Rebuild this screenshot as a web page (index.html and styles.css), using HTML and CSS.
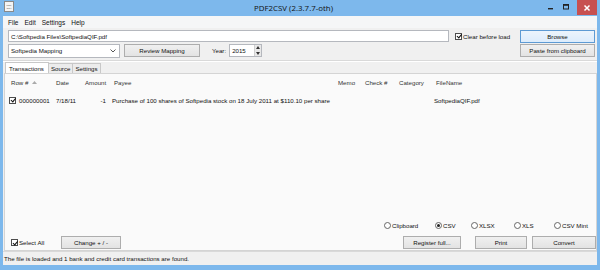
FILE: index.html
```html
<!DOCTYPE html>
<html>
<head>
<meta charset="utf-8">
<link rel="stylesheet" href="styles.css">
<title>PDF2CSV</title>
</head>
<body>
<div class="window">
  <div class="titlebar">
    <div class="app-icon"><span>PDF</span><span>CSV</span></div>
    <div class="title">PDF2CSV (2.3.7.7-oth)</div>
    <div class="controls">
      <div class="ctl min"><svg width="8" height="8" viewBox="0 0 8 8"><rect x="1" y="5" width="5" height="1.4" fill="#222"/></svg></div>
      <div class="ctl max"><svg width="8" height="8" viewBox="0 0 8 8"><rect x="1.5" y="1.5" width="5" height="4.5" fill="none" stroke="#222" stroke-width="1"/><rect x="1.5" y="1.5" width="5" height="1.3" fill="#222"/></svg></div>
      <div class="ctl close"><svg width="8" height="8" viewBox="0 0 8 8"><path d="M1.5 1.5 L6.5 6.5 M6.5 1.5 L1.5 6.5" stroke="#fff" stroke-width="1.5"/></svg></div>
    </div>
  </div>
  <div class="client">
    <div class="menubar">
      <span class="menu">File</span><span class="menu">Edit</span><span class="menu">Settings</span><span class="menu">Help</span>
    </div>
    <div class="row row1">
      <div class="textbox path">C:\Softpedia Files\SoftpediaQIF.pdf</div>
      <label class="check clear"><span class="box checked"></span>Clear before load</label>
      <div class="btn browse default">Browse</div>
    </div>
    <div class="row row2">
      <div class="combo"><span>Softpedia Mapping</span><svg width="6" height="4" viewBox="0 0 6 4"><path d="M0.5 0.5 L3 3 L5.5 0.5" fill="none" stroke="#444" stroke-width="0.9"/></svg></div>
      <div class="btn review">Review Mapping</div>
      <span class="year-label">Year:</span>
      <div class="spinner"><span>2015</span><div class="spin-btns"><div class="sb"><svg width="4" height="3" viewBox="0 0 4 3"><path d="M0 3 L2 0 L4 3Z" fill="#333"/></svg></div><div class="sb"><svg width="4" height="3" viewBox="0 0 4 3"><path d="M0 0 L2 3 L4 0Z" fill="#333"/></svg></div></div></div>
      <div class="spacer"></div>
      <div class="btn paste">Paste from clipboard</div>
    </div>
    <div class="separator"></div>
    <div class="tabs">
      <div class="tab active">Transactions</div>
      <div class="tab">Source</div>
      <div class="tab">Settings</div>
    </div>
    <div class="panel">
      <div class="list">
        <div class="lhead">
          <span class="c-row">Row #<svg class="sort" width="5" height="3" viewBox="0 0 5 3"><path d="M0 3 L2.5 0 L5 3Z" fill="#aaa"/></svg></span>
          <span class="c-date">Date</span>
          <span class="c-amt">Amount</span>
          <span class="c-payee">Payee</span>
          <span class="c-memo">Memo</span>
          <span class="c-check">Check #</span>
          <span class="c-cat">Category</span>
          <span class="c-file">FileName</span>
        </div>
        <div class="lrow">
          <span class="c-row"><span class="box checked"></span>000000001</span>
          <span class="c-date">7/18/11</span>
          <span class="c-amt num">-1</span>
          <span class="c-payee">Purchase of 100 shares of Softpedia stock on 18 July 2011 at $110.10 per share</span>
          <span class="c-memo"></span>
          <span class="c-check"></span>
          <span class="c-cat"></span>
          <span class="c-file">SoftpediaQIF.pdf</span>
        </div>
      </div>
      <div class="radios">
        <label class="radio r-clip"><span class="dot"></span>Clipboard</label>
        <label class="radio r-csv"><span class="dot on"></span>CSV</label>
        <label class="radio r-xlsx"><span class="dot"></span>XLSX</label>
        <label class="radio r-xls"><span class="dot"></span>XLS</label>
        <label class="radio r-mint"><span class="dot"></span>CSV Mint</label>
      </div>
      <div class="actions">
        <label class="check selall"><span class="box checked"></span>Select All</label>
        <div class="btn change">Change + / -</div>
        <div class="spacer"></div>
        <div class="btn register">Register full...</div>
        <div class="btn print">Print</div>
        <div class="btn convert">Convert</div>
      </div>
    </div>
    <div class="status">The file is loaded and 1 bank and credit card transactions are found.</div>
  </div>
</div>
</body>
</html>
```

FILE: styles.css
```css
html, body {
  margin: 0;
  padding: 0;
  width: 600px;
  height: 270px;
  overflow: hidden;
}
body {
  font-family: "Liberation Sans", Arial, sans-serif;
  font-size: 6.15px;
  color: #111;
}
.window {
  width: 600px;
  height: 270px;
  box-sizing: border-box;
  background: #7db8ec;
  padding: 0 3px 5px 3px;
  display: flex;
  flex-direction: column;
}
.titlebar {
  height: 16px;
  display: flex;
  align-items: center;
  flex: none;
}
.app-icon {
  width: 8px;
  height: 9px;
  margin-left: 1px;
  margin-top: -3px;
  background: #f4f4f4;
  border: 0.5px solid #8a8a8a;
  display: flex;
  flex-direction: column;
  align-items: center;
  justify-content: center;
  font-size: 2.5px;
  line-height: 3px;
  color: #555;
}
.title {
  flex: 1;
  text-align: center;
  font-family: "Open Sans", "Noto Sans", sans-serif;
  font-size: 7.9px;
  color: #111;
  padding-left: 30px;
  margin-top: -1px;
}
.controls {
  display: flex;
  align-self: flex-start;
  height: 15px;
}
.ctl {
  width: 15px;
  height: 14px;
  display: flex;
  align-items: center;
  justify-content: center;
}
.ctl.close {
  width: 20px;
  height: 15px;
  background: #c75050;
  margin-left: 4px;
}
.client {
  flex: 1;
  background: #f0f0f0;
  display: flex;
  flex-direction: column;
  min-height: 0;
}
.menubar {
  height: 12px;
  display: flex;
  align-items: center;
  padding-left: 5px;
  background: #f5f6f7;
  flex: none;
}
.menu {
  margin-right: 6px;
  font-size: 6.5px;
}
.row {
  display: flex;
  align-items: center;
  flex: none;
}
.row1 {
  height: 14px;
  padding: 1px 2px 0 5px;
}
.row2 {
  height: 15px;
  padding: 0 2px 0 5px;
}
.textbox {
  height: 12px;
  box-sizing: border-box;
  border: 1px solid #b5b8be;
  background: #fff;
  display: flex;
  align-items: center;
  padding-left: 2px;
}
.path {
  width: 441px;
}
.check {
  display: flex;
  align-items: center;
}
.box {
  width: 7px;
  height: 7px;
  box-sizing: border-box;
  border: 1px solid #4d4d4d;
  background: #fff;
  margin-right: 1px;
  position: relative;
  flex: none;
}
.box.checked::after {
  content: "";
  position: absolute;
  left: 1.5px;
  top: -0.5px;
  width: 1.6px;
  height: 3.6px;
  border: solid #111;
  border-width: 0 1px 1px 0;
  transform: rotate(40deg);
}
.clear {
  margin-left: 6px;
  width: 60px;
}
.btn {
  height: 13px;
  box-sizing: border-box;
  border: 1px solid #adadad;
  background: linear-gradient(#f0f0f0, #e3e3e3);
  display: flex;
  align-items: center;
  justify-content: center;
  flex: none;
}
.btn.default {
  border-color: #5d9ad3;
  background: linear-gradient(#ecf4fc, #dcecfc);
}
.browse {
  width: 75px;
  margin-left: auto;
}
.combo {
  width: 112px;
  height: 14px;
  box-sizing: border-box;
  border: 1px solid #b5b8be;
  background: #fff;
  display: flex;
  align-items: center;
  justify-content: space-between;
  padding: 0 3px 0 2px;
}
.review {
  width: 76px;
  margin-left: 4px;
}
.year-label {
  margin-left: 12px;
  margin-right: 3px;
}
.spinner {
  width: 33px;
  height: 13px;
  box-sizing: border-box;
  border: 1px solid #b5b8be;
  background: #fff;
  display: flex;
  align-items: center;
  justify-content: space-between;
  padding-left: 2px;
}
.spin-btns {
  display: flex;
  flex-direction: column;
  height: 100%;
  width: 6px;
  border-left: 1px solid #d0d0d0;
}
.sb {
  flex: 1;
  display: flex;
  align-items: center;
  justify-content: center;
  background: #e8e8e8;
}
.spacer {
  flex: 1;
}
.paste {
  width: 75px;
}
.separator {
  height: 0;
  border-top: 1px solid #d9d9d9;
  border-bottom: 1px solid #fff;
  margin: 2px 0 0 0;
  flex: none;
}
.tabs {
  display: flex;
  align-items: flex-end;
  height: 11px;
  padding-left: 2px;
  flex: none;
}
.tab {
  height: 10px;
  box-sizing: border-box;
  border: 1px solid #c8c8c8;
  border-bottom: none;
  background: #ececec;
  padding: 0 2px;
  display: flex;
  align-items: center;
  margin-right: -1px;
}
.tab.active {
  height: 11px;
  background: #fff;
  padding: 0 4px 0 3px;
}
.panel {
  flex: 1;
  background: #fafafa;
  border: 1px solid #d4d4d4;
  margin: 0 0 0 1px;
  display: flex;
  flex-direction: column;
  min-height: 0;
}
.list {
  flex: 1;
}
.lhead, .lrow {
  display: flex;
  align-items: center;
  white-space: nowrap;
}
.lhead {
  height: 13px;
  margin-top: 2px;
  color: #333;
}
.lrow {
  height: 10px;
  margin-top: 6px;
}
.c-row { width: 51px; display: flex; align-items: center; box-sizing: border-box; }
.lhead .c-row { padding-left: 6px; }
.lrow .c-row { padding-left: 4px; }
.lrow .c-row .box { margin-right: 3px; }
.sort { margin-left: 4px; }
.c-date { width: 29px; }
.c-amt { width: 29px; }
.c-amt.num { text-align: right; width: 21px; margin-right: 6px; }
.c-payee { width: 224px; }
.lrow .c-payee { margin-right: 2px; }
.c-memo { width: 27px; }
.c-check { width: 34px; }
.c-cat { width: 37px; }
.c-file { width: 50px; }
.lrow .c-file { margin-left: -2px; }
.radios {
  position: relative;
  display: flex;
  align-items: center;
  height: 12px;
  flex: none;
}
.radio {
  display: flex;
  align-items: center;
  position: absolute;
}
.r-clip { left: 379px; }
.r-csv { left: 430px; }
.r-xlsx { left: 466px; }
.r-xls { left: 509px; }
.r-mint { left: 549px; }
.dot {
  width: 7px;
  height: 7px;
  border-radius: 50%;
  box-sizing: border-box;
  border: 1px solid #666;
  background: #fff;
  margin-right: 1px;
  display: flex;
  align-items: center;
  justify-content: center;
}
.dot.on::after {
  content: "";
  width: 3px;
  height: 3px;
  border-radius: 50%;
  background: #222;
}
.actions {
  display: flex;
  align-items: center;
  height: 13px;
  margin: 5px 0 1px 0;
  flex: none;
}
.selall {
  margin-left: 6px;
  width: 50px;
}
.change {
  width: 60px;
}
.register {
  width: 58px;
}
.print {
  width: 52px;
  margin-left: 14px;
}
.convert {
  width: 64px;
  margin-left: 5px;
}
.status {
  height: 13px;
  display: flex;
  align-items: center;
  padding-left: 1px;
  border-top: 1px solid #d9d9d9;
  flex: none;
  background: #f0f0f0;
}
```
